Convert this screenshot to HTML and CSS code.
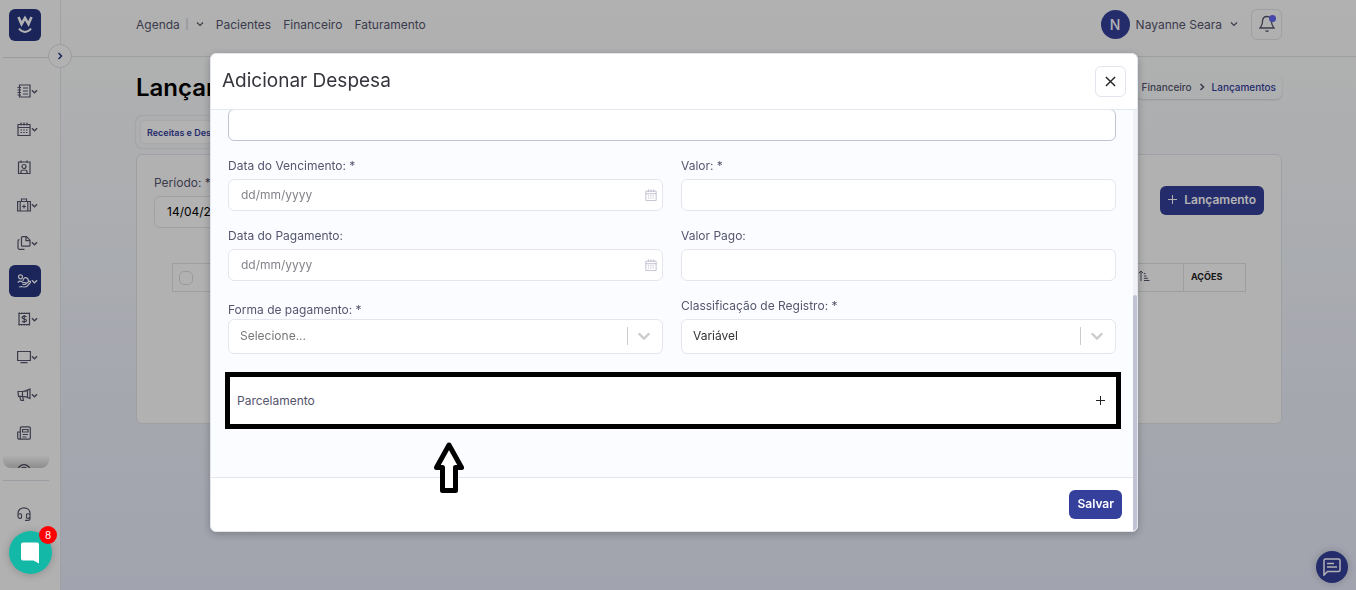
FILE: index.html
```html
<!DOCTYPE html>
<html lang="pt-BR">
<head>
  <meta charset="UTF-8">
  <meta name="viewport" content="width=device-width, initial-scale=1.0">
  <title>Lançamentos</title>
  <link rel="stylesheet" href="styles.css">
</head>
<body>
  <!-- Ícones reutilizados -->
  <svg class="sprite" aria-hidden="true">
    <symbol id="chevron" viewBox="0 0 8 8"><path d="M1 2.5 4 5.5 7 2.5"/></symbol>
    <symbol id="calendar" viewBox="0 0 14 14">
      <path d="M1 2.5h12v11H1zM1 5.500h12M4 .5v3M7 .5v3M10 .5v3"/>
      <path d="M3.500 8h7M3.500 10.500h7" stroke-dasharray="1.500 1.200"/>
    </symbol>
  </svg>

  <div class="layout">
    <!-- Menu lateral -->
    <aside class="sidebar">
      <a href="#" class="logo" aria-label="Início">
        <svg width="18" height="20" viewBox="0 0 18 20">
          <path d="M2.500 2 5.500 9 9 3 12.500 9 15.500 2" stroke-width="2.600"/>
          <path d="M3 13.500c3 4.500 9 4.500 12 0" stroke-width="2"/>
        </svg>
      </a>
      <button type="button" class="sidebar-toggle" aria-label="Expandir menu">
        <svg width="8" height="8" viewBox="0 0 8 8"><path d="M2.500 1 5.500 4 2.500 7"/></svg>
      </button>
      <nav class="side-nav">
        <a href="#" class="side-item" aria-label="Cadastros">
          <svg class="icon" viewBox="0 0 14 14"><path d="M2.500 1h10.500v12H2.500zM.5 3.500h3.500M.5 6h3.500M.5 8.500h3.500M.5 11h3.500M6 4h5M6 7h5M6 10h5"/></svg>
          <svg class="caret"><use href="#chevron"/></svg>
        </a>
        <a href="#" class="side-item" aria-label="Agenda">
          <svg class="icon"><use href="#calendar"/></svg>
          <svg class="caret"><use href="#chevron"/></svg>
        </a>
        <a href="#" class="side-item" aria-label="Pacientes">
          <svg class="icon" viewBox="0 0 14 14"><path d="M1.500 2h11.500v11.500H1.500zM4 .5V3M10 .5V3M4 13v-1.500c0-2 6-2 6 0V13"/><circle cx="7" cy="6.500" r="2"/></svg>
        </a>
        <a href="#" class="side-item" aria-label="Atendimento">
          <svg class="icon" viewBox="0 0 14 14"><path d="M.6 3.500h12.800v9.500H.6zM3.200 3.500V13M10.800 3.500V13M4.500 3.500V1h5v2.500M7 6.500v4M5 8.500h4"/></svg>
          <svg class="caret"><use href="#chevron"/></svg>
        </a>
        <a href="#" class="side-item" aria-label="Documentos">
          <svg class="icon" viewBox="0 0 14 14"><path d="M5.500.7h4l3.500 3.500v5a1 1 0 0 1-1 1H5.500a1 1 0 0 1-1-1V1.700a1 1 0 0 1 1-1zM9 1v3.700h4M2.500 3.700a1.500 1.500 0 0 0-1.500 1.500v6.600a1.500 1.500 0 0 0 1.500 1.500h5"/></svg>
          <svg class="caret"><use href="#chevron"/></svg>
        </a>
        <a href="#" class="side-item active" aria-label="Financeiro">
          <svg class="icon" viewBox="0 0 14 14"><circle cx="3.500" cy="2.800" r="2"/><path d="M.8 8.500c2-2 3.600-1.500 5 0h2.500c1.500 0 1 1.800 0 1.800H5.500M8.700 10 12.500 7c1.500 0 1.200 1.200.5 2l-3 3.200c-1 .9-4 .9-5.500.3L2 13M6 7c0-5 5.500-4 5.500.5"/></svg>
          <svg class="caret"><use href="#chevron"/></svg>
        </a>
        <a href="#" class="side-item" aria-label="Faturamento">
          <svg class="icon" viewBox="0 0 14 14"><path d="M2 1.500h10.500v11H2z"/><path d="M1.500 1h11.500M1.500 13h11.500" stroke-dasharray="1.500 1"/><path d="M9.500 5c-1-1.500-4.500-1-4.500.500 0 2 4.500 1 4.500 3 0 1.500-3.500 2-4.500.5M7.200 3v8"/></svg>
          <svg class="caret"><use href="#chevron"/></svg>
        </a>
        <a href="#" class="side-item" aria-label="Painel">
          <svg class="icon" viewBox="0 0 14 14"><path d="M.6 1.500h12.800v9H.6zM3.500 12.700h7"/></svg>
          <svg class="caret"><use href="#chevron"/></svg>
        </a>
        <a href="#" class="side-item" aria-label="Marketing">
          <svg class="icon" viewBox="0 0 14 14"><path d="M1 3.500h4.500c3 0 5.500-1.500 7.500-2.500v9.500c-2-1-4.500-2.200-7.500-2.200H1.500zM5.500 3.500v4.800M2.500 8.300l1.500 4.200h2.500l-1-4.200M10.500 2.500V9"/></svg>
          <svg class="caret"><use href="#chevron"/></svg>
        </a>
        <a href="#" class="side-item" aria-label="Relatórios">
          <svg class="icon" viewBox="0 0 14 14"><path d="M4.500.8h7.500a1.300 1.300 0 0 1 1.300 1.300v9.800a1.300 1.300 0 0 1-1.300 1.300H2.200A1.500 1.500 0 0 1 .7 11.700V6h2.600v5.700a1.200 1.200 0 0 1-1.200 1.500M3.300 6V2A1.200 1.200 0 0 1 4.500.8M5.500 3.500h5.500v2.500H5.500zM5.500 8.500h5.500M5.500 11h4"/></svg>
        </a>
        <a href="#" class="side-item" aria-label="Configurações">
          <svg class="icon" viewBox="0 0 14 14"><circle cx="7" cy="7" r="6.300"/><circle cx="7" cy="7" r="3.500"/></svg>
        </a>
      </nav>
      <div class="side-footer">
        <a href="#" class="side-item" aria-label="Suporte">
          <svg class="icon" viewBox="0 0 14 14"><path d="M1 9V6.500c0-7.500 12-7.500 12 0V12c0 1-1 1.400-2 1.400H8M1 7.500c3-1.500 3.500-.5 3.500 1v2c0 1.500-3.500 1-3.500-1zM13 7.500c-3-1.500-3.500-.5-3.500 1v2c0 1.500 3.500 1 3.500-1"/></svg>
        </a>
      </div>
    </aside>

    <div class="page">
      <!-- Cabeçalho -->
      <header class="topbar">
        <nav class="top-nav">
          <a href="#">Agenda</a>
          <span class="split"></span>
          <svg class="caret"><use href="#chevron"/></svg>
          <a href="#" class="spaced">Pacientes</a>
          <a href="#" class="spaced">Financeiro</a>
          <a href="#" class="spaced">Faturamento</a>
        </nav>
        <div class="user">
          <span class="avatar">N</span>
          <span class="user-name">Nayanne Seara</span>
          <svg class="caret"><use href="#chevron"/></svg>
          <button type="button" class="bell" aria-label="Notificações">
            <svg width="16" height="18" viewBox="0 0 16 18"><path d="M8 1.500c-3.500 0-4.500 2.500-4.500 5 0 4-1.500 4.500-2.500 6.500h14c-1-2-2.500-2.500-2.500-6.500 0-2.500-1-5-4.500-5zM6.500 15.500c.5 1 2.500 1 3 0"/></svg>
          </button>
        </div>
      </header>

      <main class="content">
        <div class="title-row">
          <h1>Lançamentos</h1>
          <nav class="breadcrumb">
            <a href="#">Financeiro</a>
            <svg width="8" height="8" viewBox="0 0 8 8"><path d="M2.500 1 5.500 4 2.500 7"/></svg>
            <a href="#" class="current">Lançamentos</a>
          </nav>
        </div>

        <div class="tabs">
          <button type="button" class="tab">Receitas e Despesas</button>
        </div>

        <section class="card">
          <div class="filters">
            <div>
              <label for="periodo">Período: *</label>
              <input type="text" id="periodo" class="input" value="14/04/2024">
            </div>
            <button type="button" class="btn btn-new">
              <svg width="9" height="9" viewBox="0 0 9 9"><path d="M4.500 0v9M0 4.500h9"/></svg>
              Lançamento
            </button>
          </div>
          <table class="grid">
            <tr>
              <th class="col-check"><input type="checkbox" aria-label="Selecionar todos"></th>
              <th class="col-sort"><svg width="12" height="12" viewBox="0 0 12 12"><path d="M3 11V1M.8 3.200 3 1l2.200 2.200M6 3.500h1.500M6 6h2.500M6 8.300h4M6 10.500h5.500"/></svg></th>
              <th class="col-actions">AÇÕES</th>
            </tr>
          </table>
        </section>
      </main>
    </div>
  </div>

  <button type="button" class="help" aria-label="Mensagens">
    <svg width="18" height="18" viewBox="0 0 18 18"><path d="M1 17V2.500A1.500 1.500 0 0 1 2.500 1h13A1.500 1.500 0 0 1 17 2.500v9.500a1.500 1.500 0 0 1-1.500 1.500H4.500zM4 5.500h7M4 9h10"/></svg>
  </button>

  <!-- Modal -->
  <div class="backdrop">
    <form class="modal" role="dialog" aria-labelledby="modal-title">
      <div class="modal-header">
        <h2 id="modal-title">Adicionar Despesa</h2>
        <button type="button" class="close" aria-label="Fechar">
          <svg width="11" height="11" viewBox="0 0 12 12"><path d="M1 1 11 11M11 1 1 11"/></svg>
        </button>
      </div>
      <div class="modal-scroll">
        <div class="modal-main">
          <div class="modal-body">
            <input type="text" class="input input-focus" aria-label="Descrição">
            <div class="fields">
              <div class="field">
                <label for="vencimento">Data do Vencimento: *</label>
                <div class="date">
                  <input type="text" id="vencimento" class="input" placeholder="dd/mm/yyyy">
                  <svg><use href="#calendar"/></svg>
                </div>
              </div>
              <div class="field">
                <label for="valor">Valor: *</label>
                <input type="text" id="valor" class="input">
              </div>
              <div class="field">
                <label for="pagamento">Data do Pagamento:</label>
                <div class="date">
                  <input type="text" id="pagamento" class="input" placeholder="dd/mm/yyyy">
                  <svg><use href="#calendar"/></svg>
                </div>
              </div>
              <div class="field">
                <label for="valor-pago">Valor Pago:</label>
                <input type="text" id="valor-pago" class="input">
              </div>
              <div class="field tight">
                <label for="forma">Forma de pagamento: *</label>
                <div class="select">
                  <select id="forma" class="empty"><option>Selecione...</option></select>
                  <svg><use href="#chevron"/></svg>
                </div>
              </div>
              <div class="field">
                <label for="classificacao">Classificação de Registro: *</label>
                <div class="select">
                  <select id="classificacao"><option>Variável</option></select>
                  <svg><use href="#chevron"/></svg>
                </div>
              </div>
            </div>
            <div class="highlight">
              <button type="button" class="accordion">
                Parcelamento
                <svg width="9" height="9" viewBox="0 0 9 9"><path d="M4.500 0v9M0 4.500h9"/></svg>
              </button>
              <svg class="arrow" width="30" height="51" viewBox="0 0 30 51"><path d="M15 3 27.500 25.500H21.500V48.500H8.500V25.500H2.500z"/></svg>
            </div>
          </div>
          <div class="modal-footer">
            <button type="submit" class="btn">Salvar</button>
          </div>
        </div>
        <div class="scrollbar"><div class="thumb"></div></div>
      </div>
    </form>
  </div>

  <!-- Chat -->
  <button type="button" class="chat" aria-label="Abrir chat">
    <svg width="20" height="22" viewBox="0 0 20 22"><path d="M2 .5h14a2 2 0 0 1 2 2V21.500L12.500 18.500H2a2 2 0 0 1-2-2V2.500a2 2 0 0 1 2-2z"/></svg>
    <span class="badge">8</span>
  </button>
</body>
</html>
```

FILE: styles.css
```css
* {
  margin: 0;
  padding: 0;
  box-sizing: border-box;
}

body {
  font-family: Inter, "Liberation Sans", sans-serif;
  font-size: 12px;
  color: #55556d;
  overflow: hidden;
}

a {
  color: inherit;
  text-decoration: none;
}

button,
input,
select {
  font: inherit;
  color: inherit;
}

svg {
  fill: none;
  stroke: currentColor;
  flex-shrink: 0;
}

.sprite {
  position: absolute;
  width: 0;
  height: 0;
}

.caret {
  width: 8px;
  height: 8px;
  stroke-width: 1.2;
}

.layout {
  display: flex;
  height: 100vh;
}

/* Menu lateral */
.sidebar {
  position: relative;
  display: flex;
  flex-direction: column;
  width: 61px;
  padding: 9px 11px 0 3px;
  background: #fefefe;
  border-right: 1px solid #e6e7ec;
}

.logo {
  display: flex;
  align-items: center;
  justify-content: center;
  width: 32px;
  height: 32px;
  margin: 0 0 16px 6px;
  border-radius: 6px;
  background: #273581;
  color: #fff;
}

.sidebar-toggle {
  position: absolute;
  top: 44px;
  right: -12px;
  display: flex;
  align-items: center;
  justify-content: center;
  width: 24px;
  height: 24px;
  border: 1px solid #dfe1e8;
  border-radius: 50%;
  background: #fefefe;
  color: #273581;
  stroke-width: 1.5;
}

.side-nav {
  position: relative;
  flex: 1;
  min-height: 0;
  overflow: hidden;
  display: flex;
  flex-direction: column;
  gap: 6px;
  padding: 17px 0 0 6px;
  border-top: 1px solid #dfe1e8;
}

.side-nav::after {
  content: '';
  position: absolute;
  left: 0;
  right: 0;
  bottom: 0;
  height: 13px;
  border-radius: 0 0 8px 8px;
  background: linear-gradient(rgba(0, 0, 0, 0), rgba(0, 0, 0, 0.2));
}

.side-item {
  display: flex;
  align-items: center;
  flex-shrink: 0;
  width: 32px;
  height: 32px;
  padding-left: 8px;
  border-radius: 6px;
}

.side-item.active {
  background: #273581;
  color: #fff;
}

.side-item .icon {
  width: 14px;
  height: 14px;
  stroke-width: 1.2;
}

.side-item .caret {
  width: 7px;
  height: 7px;
  stroke-width: 1.5;
}

.side-footer {
  margin-top: 12px;
  padding: 17px 0 60px 6px;
  border-top: 1px solid #dfe1e8;
}

/* Cabeçalho */
.page {
  flex: 1;
  min-width: 0;
  background: linear-gradient(#fefefe, #f7f9fc 30%, #edf1fb 65%, #e7eafa);
}

.topbar {
  display: flex;
  align-items: center;
  justify-content: space-between;
  height: 57px;
  padding: 0 74px 8px 75px;
  border-bottom: 1px solid #e2e4e9;
}

.top-nav,
.user {
  display: flex;
  align-items: center;
}

.split {
  width: 2px;
  height: 12px;
  margin: 0 8px 0 6px;
  background: #e0e1e8;
}

.spaced {
  margin-left: 12px;
}

.avatar {
  width: 29px;
  height: 29px;
  border-radius: 50%;
  background: #34409b;
  color: #fff;
  font-size: 14px;
  font-weight: 500;
  line-height: 29px;
  text-align: center;
}

.user-name {
  margin: 0 8px 0 6px;
}

.bell {
  position: relative;
  display: flex;
  align-items: center;
  justify-content: center;
  width: 31px;
  height: 31px;
  margin-left: 13px;
  border: 1px solid #e2e4ea;
  border-radius: 6px;
  background: none;
  stroke-width: 1.3;
}

.bell::after {
  content: '';
  position: absolute;
  top: 5px;
  right: 5px;
  width: 7px;
  height: 7px;
  border-radius: 50%;
  background: #6366f1;
}

/* Conteúdo */
.content {
  padding: 15px 74px 0 75px;
}

.title-row {
  display: flex;
  align-items: center;
  justify-content: space-between;
  height: 30px;
}

h1 {
  font-size: 24px;
  font-weight: 600;
  color: #000;
}

.breadcrumb {
  display: flex;
  align-items: center;
  gap: 6px;
  height: 24px;
  padding: 0 6px;
  border-radius: 6px;
  box-shadow: 0 1px 2px rgba(0, 0, 0, 0.15);
  font-size: 10px;
  font-weight: 500;
}

.breadcrumb svg {
  stroke-width: 1.5;
}

.breadcrumb .current {
  color: #34409b;
}

.tabs {
  display: inline-flex;
  margin-top: 14px;
  padding: 5px;
  border-radius: 6px;
  box-shadow: 0 0 2px rgba(0, 0, 0, 0.2);
}

.tab {
  height: 22px;
  padding: 0 6px;
  border: 0;
  border-radius: 4px;
  background: #fff;
  box-shadow: 0 0 2px rgba(0, 0, 0, 0.15);
  color: #34409b;
  font-size: 9px;
  font-weight: 600;
}

.card {
  height: 270px;
  margin-top: 6px;
  padding: 20px 17px;
  border: 1px solid #e4e5ea;
  border-radius: 6px;
  background: #fefefe;
}

.filters {
  display: flex;
  align-items: flex-end;
  justify-content: space-between;
}

.filters label {
  display: block;
  height: 21px;
  line-height: 16px;
}

.filters .input {
  width: 200px;
  color: #000;
}

.btn {
  height: 29px;
  padding: 0 8px 2px;
  border: 0;
  border-radius: 6px;
  background: #34409b;
  color: #fff;
  font-weight: 600;
}

.btn-new {
  display: flex;
  align-items: center;
  gap: 7px;
  margin-bottom: 13px;
}

.grid {
  width: calc(100% - 36px);
  margin: 35px 18px 0;
  border-collapse: collapse;
}

.grid th {
  height: 28px;
  border: 1px solid #e2e3e8;
  text-align: left;
}

.grid .col-check {
  width: 60px;
  padding-left: 6px;
  border-right: 0;
}

.grid .col-sort {
  padding-right: 33px;
  border-left: 0;
  text-align: right;
}

.grid .col-actions {
  width: 62px;
  padding: 0 0 2px 7px;
  color: #222;
  font-size: 9px;
}

.col-check input {
  appearance: none;
  display: block;
  width: 14px;
  height: 14px;
  border: 1px solid #dcdde3;
  border-radius: 5px;
}

.help {
  position: fixed;
  right: 8px;
  bottom: 7px;
  display: flex;
  align-items: center;
  justify-content: center;
  width: 32px;
  height: 32px;
  border: 0;
  border-radius: 50%;
  background: #34409b;
  box-shadow: 0 0 8px rgba(0, 0, 0, 0.2);
  color: #fff;
  stroke-width: 1.5;
}

/* Campos */
.input {
  display: block;
  width: 100%;
  height: 32px;
  padding: 0 12px 1px;
  border: 1px solid #e4e6ed;
  border-radius: 6px;
  background: #fff;
}

.input::placeholder {
  color: #84848c;
}

.input-focus {
  border-color: #c1c1d4;
}

/* Modal */
.backdrop {
  position: fixed;
  inset: 0;
  display: flex;
  align-items: flex-start;
  justify-content: center;
  padding: 53px 8px 0 0;
  background: rgba(0, 0, 0, 0.3);
}

.modal {
  width: 928px;
  max-width: 100%;
  overflow: hidden;
  border: 1px solid #e4e6ed;
  border-radius: 6px;
  background: #fff;
  box-shadow: 0 2px 8px rgba(0, 0, 0, 0.25);
}

.modal-header {
  display: flex;
  align-items: center;
  justify-content: space-between;
  height: 56px;
  padding: 0 11px;
  border-bottom: 1px solid #e4e6ed;
}

.modal-header h2 {
  padding-bottom: 2px;
  font-size: 19px;
  font-weight: 400;
  color: #35353d;
}

.close {
  display: flex;
  align-items: center;
  justify-content: center;
  width: 31px;
  height: 31px;
  border: 1px solid #e4e4ee;
  border-radius: 6px;
  background: #fff;
  color: #222;
  stroke-width: 1.5;
}

.modal-scroll {
  display: flex;
}

.modal-main {
  flex: 1;
  overflow: hidden;
}

.modal-body {
  padding: 0 17px 48px;
  margin-top: -1px;
  background: #fbfcff;
}

.fields {
  display: grid;
  grid-template-columns: 1fr 1fr;
  align-items: end;
  gap: 17px 18px;
  margin: 17px 0 18px;
}

.field label {
  display: block;
  margin-bottom: 5px;
  line-height: 16px;
}

.field.tight label {
  margin-bottom: 1px;
}

.date,
.select {
  position: relative;
}

.date svg {
  position: absolute;
  top: 10px;
  right: 6px;
  width: 12px;
  height: 12px;
  color: #b9b9ca;
}

.select select {
  appearance: none;
  display: block;
  width: 100%;
  height: 35px;
  padding: 0 46px 2px 11px;
  border: 1px solid #e4e6ed;
  border-radius: 6px;
  background: #fff;
  color: #333;
}

.select select.empty {
  color: #777;
}

.select::after {
  content: '';
  position: absolute;
  top: 8px;
  right: 35px;
  width: 1px;
  height: 18px;
  background: #ccc;
}

.select svg {
  position: absolute;
  top: 10px;
  right: 12px;
  width: 14px;
  height: 14px;
  color: #ccc;
  stroke-width: 1.3;
}

/* Destaque do parcelamento */
.highlight {
  position: relative;
  margin: 0 -5px 0 -3px;
  border: 5px solid #000;
}

.accordion {
  display: flex;
  align-items: center;
  justify-content: space-between;
  width: 100%;
  height: 47px;
  padding: 0 11px 0 7px;
  border: 0;
  background: #fff;
}

.accordion svg {
  color: #222;
}

.arrow {
  position: absolute;
  top: 65px;
  left: 204px;
  fill: #fff;
  stroke: #000;
  stroke-width: 5;
  stroke-linejoin: round;
}

.modal-footer {
  display: flex;
  align-items: center;
  justify-content: flex-end;
  height: 54px;
  padding: 0 11px;
  border-top: 1px solid #e4e6ed;
}

.scrollbar {
  display: flex;
  flex-direction: column;
  justify-content: flex-end;
  width: 4px;
  background: #f0f1f6;
}

.thumb {
  height: 56%;
  border-radius: 4px 4px 0 0;
  background: #c1c2d4;
}

/* Chat */
.chat {
  position: fixed;
  left: 9px;
  bottom: 16px;
  display: flex;
  align-items: center;
  justify-content: center;
  width: 43px;
  height: 43px;
  border: 0;
  border-radius: 50%;
  background: #14b8a6;
  box-shadow: 0 1px 8px rgba(0, 0, 0, 0.2);
}

.chat svg {
  fill: #fff;
  stroke: none;
}

.badge {
  position: absolute;
  top: -5px;
  right: -5px;
  width: 18px;
  height: 18px;
  border-radius: 50%;
  background: #f00;
  color: #fff;
  font-size: 10px;
  line-height: 18px;
}
```
